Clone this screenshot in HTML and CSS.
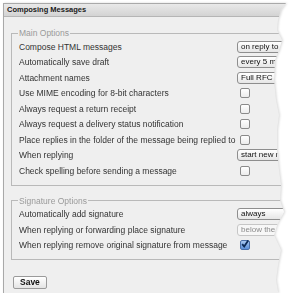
FILE: index.html
```html
<!DOCTYPE html>
<html lang="en">
<head>
  <meta charset="UTF-8">
  <title>Composing Messages</title>
  <link rel="stylesheet" href="styles.css">
</head>
<body>
  <div class="sheet">
    <div class="window">
      <div class="titlebar">Composing Messages</div>

      <form class="prefs">
        <!-- main options -->
        <fieldset class="group">
          <legend>Main Options</legend>
          <div class="row"><span class="label">Compose HTML messages</span><span class="select">on reply to HTML messages</span></div>
          <div class="row"><span class="label">Automatically save draft</span><span class="select">every 5 minutes</span></div>
          <div class="row"><span class="label">Attachment names</span><span class="select">Full RFC 2231</span></div>
          <div class="row"><span class="label">Use MIME encoding for 8-bit characters</span><span class="check"></span></div>
          <div class="row"><span class="label">Always request a return receipt</span><span class="check"></span></div>
          <div class="row"><span class="label">Always request a delivery status notification</span><span class="check"></span></div>
          <div class="row"><span class="label">Place replies in the folder of the message being replied to</span><span class="check"></span></div>
          <div class="row"><span class="label">When replying</span><span class="select">start new message above the quote</span></div>
          <div class="row"><span class="label">Check spelling before sending a message</span><span class="check"></span></div>
        </fieldset>

        <!-- signature -->
        <fieldset class="group sig">
          <legend>Signature Options</legend>
          <div class="row"><span class="label">Automatically add signature</span><span class="select">always</span></div>
          <div class="row"><span class="label">When replying or forwarding place signature</span><span class="select disabled">below the quote</span></div>
          <div class="row"><span class="label">When replying remove original signature from message</span>
            <span class="check on"><svg viewBox="0 0 10 10" width="10" height="10"><path d="M2.2 5.2 L4.2 7.6 L8.2 1.6" fill="none" stroke="#0d2a55" stroke-width="1.8"/></svg></span>
          </div>
        </fieldset>

        <div class="actions">
          <button type="button" class="save">Save</button>
        </div>
      </form>
    </div>
  </div>
</body>
</html>
```

FILE: styles.css
```css
body {
    margin: 0;
    background: #fff;
    font-family: "Liberation Sans", Arial, sans-serif;
}
.sheet {
    padding: 3px 0 0 3px;
    height: 290px;
    overflow: hidden;
    filter: drop-shadow(1px 0 1px rgba(0, 0, 0, 0.15));
}
/* torn right edge */
.window {
    width: 300px;
    height: 300px;
    background: #efefef;
    border-left: 1px solid #a9a9a9;
    border-top: 1px solid #a9a9a9;
    box-sizing: border-box;
    clip-path: polygon(0 0, 283px 0, 278px 7px, 275px 17px, 274px 27px, 279px 37px, 276px 47px,
        272px 57px, 271px 77px, 273px 97px, 276px 112px, 274px 127px, 274px 147px, 276px 167px,
        278px 182px, 277px 197px, 281px 209px, 274px 222px, 271px 232px, 278px 247px, 275px 262px,
        273px 277px, 277px 300px, 0 300px);
}
.titlebar {
    height: 12px;
    padding: 0 0 0 3px;
    font-size: 7.5px;
    font-weight: bold;
    line-height: 12px;
    color: #1a1a1a;
    background: linear-gradient(#e9e9e9, #d3d3d3);
    border-bottom: 1px solid #b5b5b5;
}
.prefs {
    padding: 10px 0 0 7px;
}
.group {
    margin: 0 0 6px 0;
    padding: 0 0 6px 7px;
    border: 1px solid #b9b9b9;
    width: 320px;
}
.group.sig {
    margin-top: 9px;
}
.group legend {
    padding: 0 1px;
    margin-left: -1px;
    font-size: 8.5px;
    color: #9a9a9a;
    line-height: 12px;
}
.row {
    display: grid;
    grid-template-columns: 218px auto;
    align-items: center;
    height: 15.5px;
    font-size: 8.5px;
    color: #333;
}
.label {
    white-space: nowrap;
}
.select {
    height: 10px;
    width: 80px;
    padding: 0 0 0 3px;
    border: 1px solid #8e8e8e;
    border-radius: 3px;
    background: linear-gradient(#fff, #e6e6e6);
    font-size: 8px;
    line-height: 10px;
    color: #111;
    white-space: nowrap;
    overflow: hidden;
}
.select.disabled {
    border-color: #c6c6c6;
    background: #f7f7f7;
    color: #8a8a8a;
}
.check {
    margin-left: 3px;
    width: 8px;
    height: 8px;
    border: 1px solid #8a8a8a;
    border-radius: 2px;
    background: linear-gradient(#fff, #ececec);
    position: relative;
}
.check.on {
    border-color: #4a6fa8;
    background: linear-gradient(#a9c8f0, #5b8fd8);
}
.check.on svg {
    position: absolute;
    left: -1px;
    top: -2px;
}
.actions {
    padding: 5px 0 0 2px;
}
.save {
    font-family: "Liberation Sans", Arial, sans-serif;
    font-size: 8.5px;
    font-weight: bold;
    color: #111;
    padding: 0 6px;
    height: 13px;
    line-height: 11px;
    border: 1px solid #9a9a9a;
    border-radius: 2px;
    background: linear-gradient(#fff, #e4e4e4);
}
```
